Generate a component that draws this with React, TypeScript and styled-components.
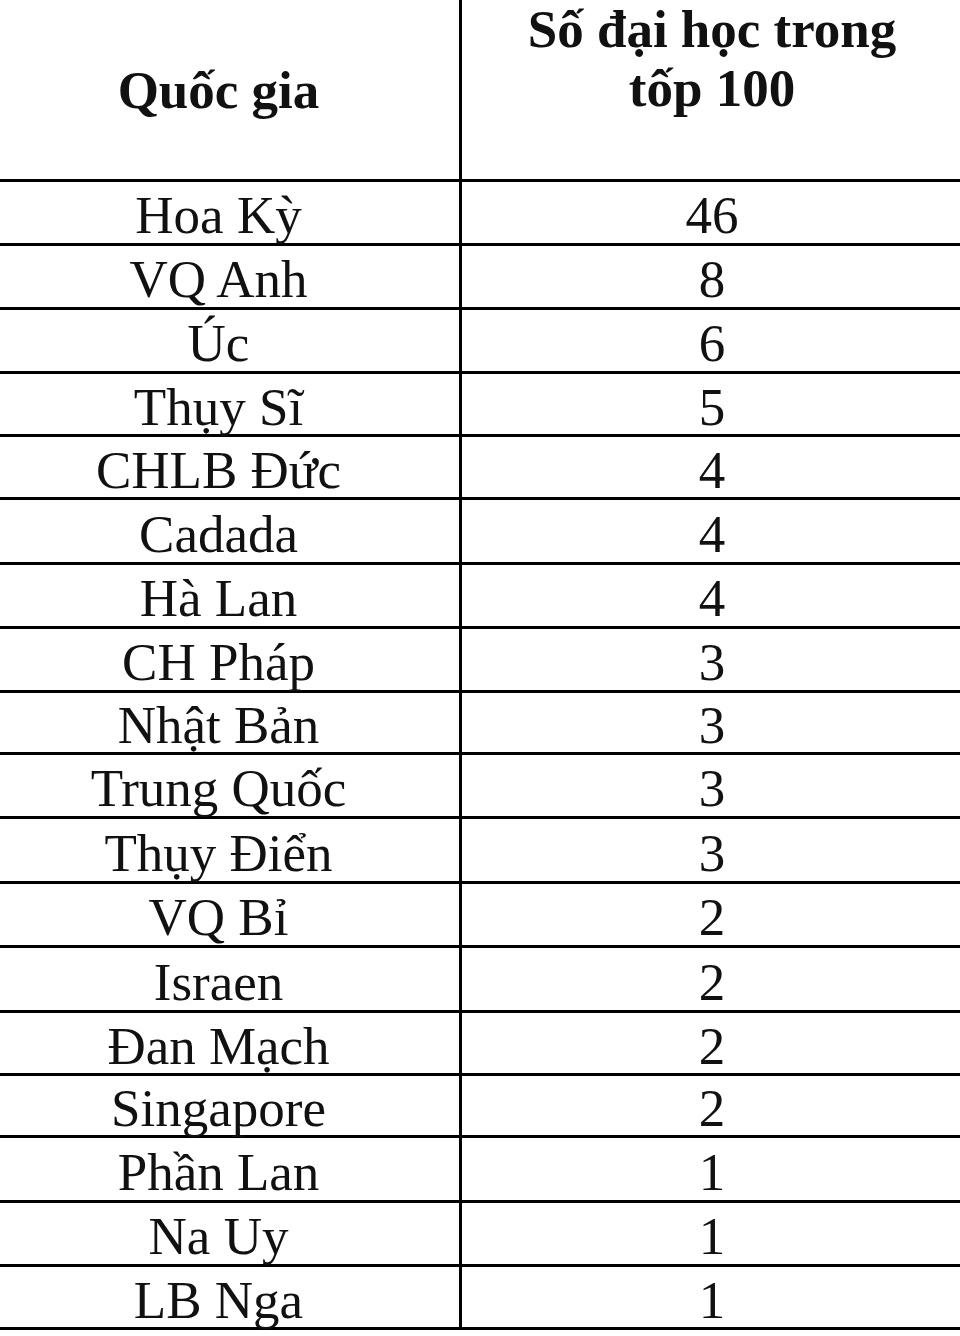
import styled, { createGlobalStyle } from "styled-components";

const GlobalStyle = createGlobalStyle`
  html, body {
    margin: 0;
    padding: 0;
    background: #fff;
  }
  body {
    font-family: "Liberation Serif", "Times New Roman", serif;
    color: #111;
  }
`;

type Entry = { country: string; count: number; height: number };

// row heights follow the scanned table, lines aren't evenly spaced
const rows: Entry[] = [
  { country: "Hoa Kỳ", count: 46, height: 64 },
  { country: "VQ Anh", count: 8, height: 64 },
  { country: "Úc", count: 6, height: 64 },
  { country: "Thụy Sĩ", count: 5, height: 63 },
  { country: "CHLB Đức", count: 4, height: 63 },
  { country: "Cadada", count: 4, height: 65 },
  { country: "Hà Lan", count: 4, height: 64 },
  { country: "CH Pháp", count: 3, height: 64 },
  { country: "Nhật Bản", count: 3, height: 62 },
  { country: "Trung Quốc", count: 3, height: 64 },
  { country: "Thụy Điển", count: 3, height: 65 },
  { country: "VQ Bỉ", count: 2, height: 64 },
  { country: "Israen", count: 2, height: 65 },
  { country: "Đan Mạch", count: 2, height: 63 },
  { country: "Singapore", count: 2, height: 62 },
  { country: "Phần Lan", count: 1, height: 65 },
  { country: "Na Uy", count: 1, height: 64 },
  { country: "LB Nga", count: 1, height: 63 },
];

export default function App() {
  return (
    <>
      <GlobalStyle />
      <Page>
        <Table>
          <HeaderRow>
            <HeaderCell $offset={61} $left>
              Quốc gia
            </HeaderCell>
            <HeaderCell $offset={0}>
              Số đại học trong
              <br />
              tốp 100
            </HeaderCell>
          </HeaderRow>
          {rows.map((r) => (
            <Row key={r.country} $height={r.height}>
              <CountryCell>{r.country}</CountryCell>
              <CountCell>{r.count}</CountCell>
            </Row>
          ))}
        </Table>
      </Page>
    </>
  );
}

const Page = styled.div`
  width: 960px;
  height: 1336px;
  overflow: hidden;
  background: #fff;
`;

const Table = styled.div`
  width: 984px;
  margin-left: -22px;
  display: flex;
  flex-direction: column;
`;

const HeaderRow = styled.div`
  display: flex;
  height: 182px;
  box-sizing: border-box;
  border-bottom: 3px solid #000;
`;

const HeaderCell = styled.div<{ $offset: number; $left?: boolean }>`
  box-sizing: border-box;
  width: ${(p) => (p.$left ? "484px" : "500px")};
  border-right: ${(p) => (p.$left ? "3px solid #000" : "none")};
  padding-top: ${(p) => p.$offset}px;
  text-align: center;
  font-size: 53px;
  font-weight: 700;
  line-height: 59px;
`;

const Row = styled.div<{ $height: number }>`
  display: flex;
  height: ${(p) => p.$height}px;
  box-sizing: border-box;
  border-bottom: 3px solid #000;
`;

const CountryCell = styled.div`
  box-sizing: border-box;
  width: 484px;
  padding-top: 6px;
  border-right: 3px solid #000;
  display: flex;
  align-items: center;
  justify-content: center;
  font-size: 53px;
  line-height: 61px;
  white-space: nowrap;
`;

const CountCell = styled.div`
  box-sizing: border-box;
  width: 500px;
  padding-top: 6px;
  display: flex;
  align-items: center;
  justify-content: center;
  font-size: 53px;
  line-height: 61px;
`;
